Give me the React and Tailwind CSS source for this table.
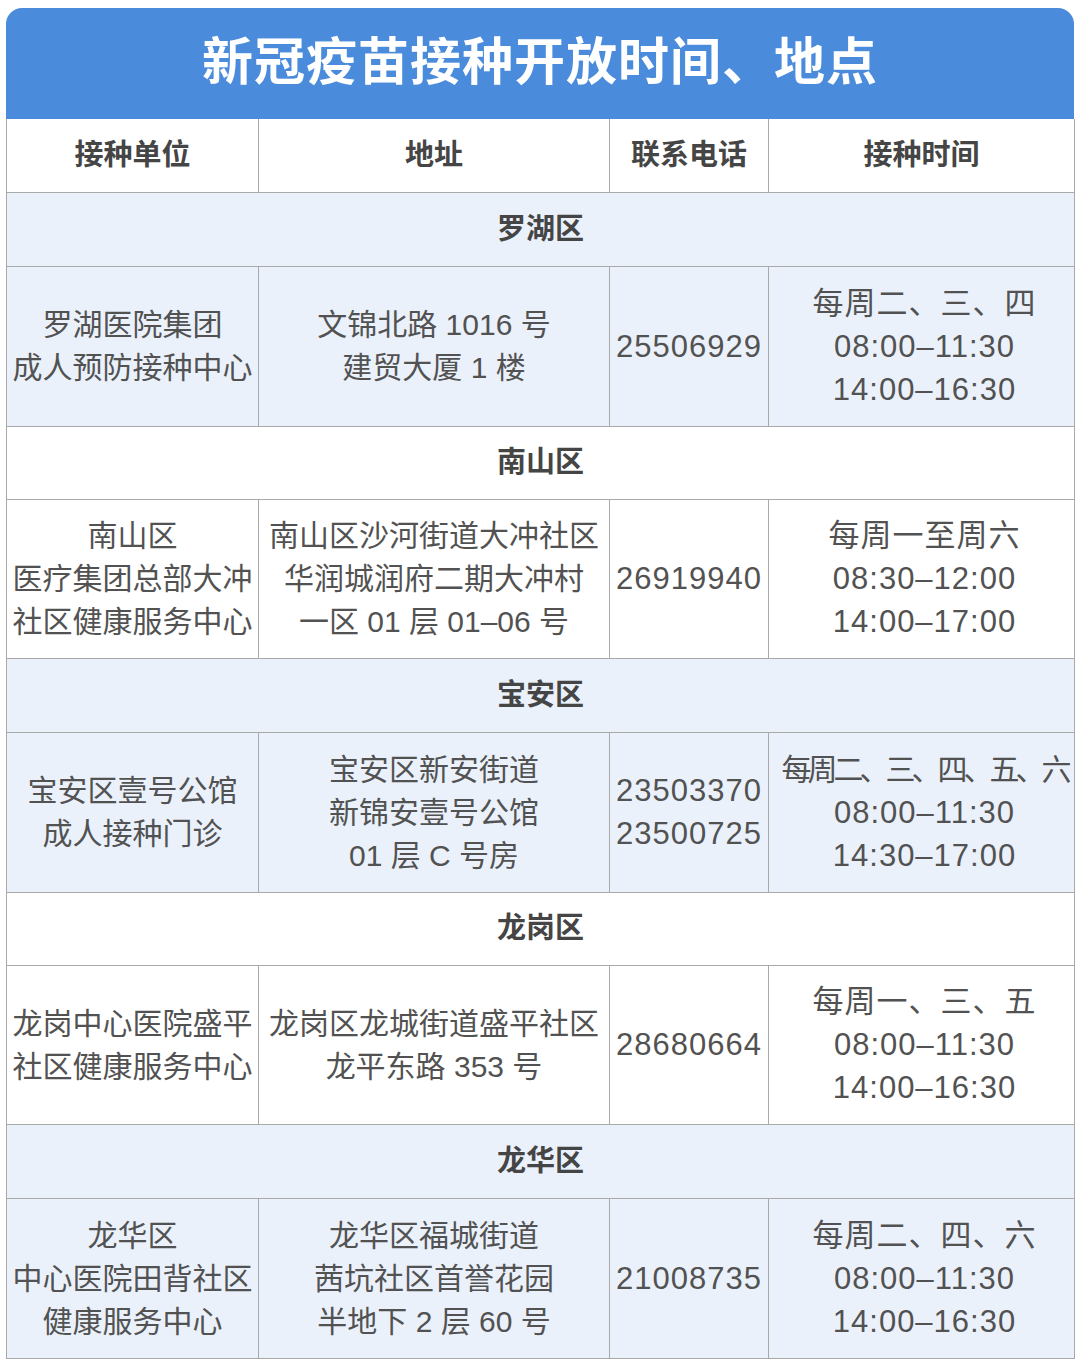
const font = { fontFamily: '"Liberation Sans", "Noto Sans CJK SC", sans-serif' };

const districts = [
  {
    name: '罗湖区',
    shade: true,
    unit: ['罗湖医院集团', '成人预防接种中心'],
    addr: ['文锦北路 1016 号', '建贸大厦 1 楼'],
    phone: ['25506929'],
    time: ['每周二、三、四', '08:00–11:30', '14:00–16:30'],
  },
  {
    name: '南山区',
    shade: false,
    unit: ['南山区', '医疗集团总部大冲', '社区健康服务中心'],
    addr: ['南山区沙河街道大冲社区', '华润城润府二期大冲村', '一区 01 层 01–06 号'],
    phone: ['26919940'],
    time: ['每周一至周六', '08:30–12:00', '14:00–17:00'],
  },
  {
    name: '宝安区',
    shade: true,
    unit: ['宝安区壹号公馆', '成人接种门诊'],
    addr: ['宝安区新安街道', '新锦安壹号公馆', '01 层 C 号房'],
    phone: ['23503370', '23500725'],
    time: ['每周二、三、四、五、六', '08:00–11:30', '14:30–17:00'],
    squeeze: true,
  },
  {
    name: '龙岗区',
    shade: false,
    unit: ['龙岗中心医院盛平', '社区健康服务中心'],
    addr: ['龙岗区龙城街道盛平社区', '龙平东路 353 号'],
    phone: ['28680664'],
    time: ['每周一、三、五', '08:00–11:30', '14:00–16:30'],
  },
  {
    name: '龙华区',
    shade: true,
    unit: ['龙华区', '中心医院田背社区', '健康服务中心'],
    addr: ['龙华区福城街道', '茜坑社区首誉花园', '半地下 2 层 60 号'],
    phone: ['21008735'],
    time: ['每周二、四、六', '08:00–11:30', '14:00–16:30'],
  },
];

function Lines({ items, squeezeFirst }) {
  return items.map((t, i) => (
    <div
      key={i}
      className={`whitespace-nowrap ${squeezeFirst && i === 0 ? 'tracking-[-4px] text-[30px]' : ''}`}
    >
      {t}
    </div>
  ));
}

export default function App() {
  const cell = 'border border-[#a9a9a9] text-center align-middle';
  return (
    <div className="w-[1080px] h-[1370px] bg-white pt-[8px] pl-[6px]" style={font}>
      <div className="w-[1068px] h-[111px] rounded-t-[16px] bg-[#4a8bdc] flex items-center justify-center">
        <span className="text-white text-[51px] font-bold tracking-[1px]">
          新冠疫苗接种开放时间、地点
        </span>
      </div>
      <table className="w-[1068px] border-collapse table-fixed text-[30px] leading-[43px] text-[#525252]">
        <colgroup>
          <col className="w-[252px]" />
          <col className="w-[351px]" />
          <col className="w-[159px]" />
          <col className="w-[306px]" />
        </colgroup>
        <tbody>
          <tr className="h-[73px] bg-white font-bold text-[#454545] text-[29px]">
            <td className={cell + ' border-t-0'}>接种单位</td>
            <td className={cell + ' border-t-0'}>地址</td>
            <td className={cell + ' border-t-0'}>联系电话</td>
            <td className={cell + ' border-t-0'}>接种时间</td>
          </tr>
          {districts.map((d) => (
            <>
              <tr key={d.name + 'h'} className={d.shade ? 'h-[74px] bg-[#eaf1fb]' : 'h-[73px] bg-white'}>
                <td colSpan={4} className={cell + ' font-bold text-[#454545] text-[29px]'}>
                  {d.name}
                </td>
              </tr>
              <tr key={d.name + 'r'} className={d.shade ? 'h-[160px] bg-[#eaf1fb]' : 'h-[159px] bg-white'}>
                <td className={cell}>
                  <Lines items={d.unit} />
                </td>
                <td className={cell}>
                  <Lines items={d.addr} />
                </td>
                <td className={cell + ' tracking-[1px] text-[31px]'}>
                  <Lines items={d.phone} />
                </td>
                <td className={cell + ' tracking-[1px] text-[31px] pl-[6px]'}>
                  <Lines items={d.time} squeezeFirst={d.squeeze} />
                </td>
              </tr>
            </>
          ))}
        </tbody>
      </table>
    </div>
  );
}
